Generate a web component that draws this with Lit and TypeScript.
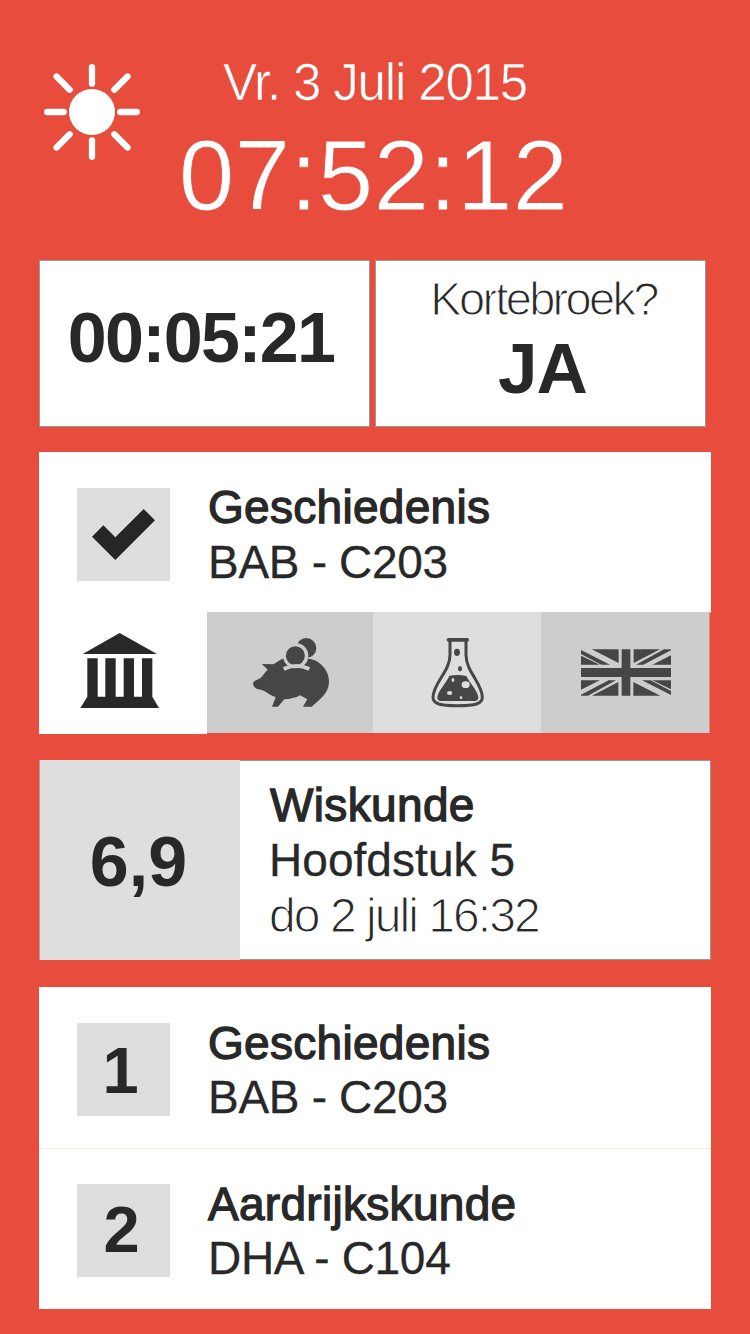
import { LitElement, html, css, svg } from "lit";
import { customElement, property } from "lit/decorators.js";

const RED = css`#e84c3d`;

@customElement("lesson-row")
class LessonRow extends LitElement {
  @property() subject = "";
  @property() room = "";
  @property() badge = "";

  static styles = css`
    :host { display: block; height: 161px; box-sizing: border-box; padding: 36px 0 0 38px; }
    :host([divided]) { padding-top: 35px; border-top: 1px solid #fde6e4; }
    .row { display: flex; align-items: flex-start; }
    .badge {
      width: 93px; height: 93px; flex: none; box-sizing: border-box; padding-right: 6px;
      background: #dedede; font-size: 65px; font-weight: 700; line-height: 95px; text-align: center;
    }
    :host([divided]) .badge { line-height: 91px; padding-right: 4px; }
    .badge.tick { padding: 0; }
    .tick svg { display: block; }
    .info { margin: -7px 0 0 38px; line-height: 54px; white-space: nowrap; }
    :host([loose]) .info { margin-top: -8px; line-height: 55px; }
    .subject { letter-spacing: 0.3px; -webkit-text-stroke: 1.3px #282828; }
    .room { letter-spacing: -0.3px; -webkit-text-stroke: 0.3px #282828; }
  `;

  render() {
    return html`<div class="row">
      ${this.badge
        ? html`<div class="badge">${this.badge}</div>`
        : html`<div class="badge tick"><svg width="93" height="93" viewBox="0 0 93 93">
            <path fill="#262626" d="M15 48.7 26.3 37.3 38.3 49.3 66.7 21 78 32.3 38.3 72Z" />
          </svg></div>`}
      <div class="info">
        <div class="subject">${this.subject}</div>
        <div class="room">${this.room}</div>
      </div>
    </div>`;
  }
}

const temple = html`<svg width="168" height="122" viewBox="27 36 504 366" fill="#282828">
  <path d="M269 99 381 162H158ZM172 175H203V290H226V175H257V290H281V175H312V290H336V175H367V290L387 324H151L172 290Z" />
</svg>`;

const piggy = html`<svg width="166" height="121" viewBox="-69 36 498 363" fill="#464646">
  <path d="M69 251Q70 242 82 239Q92 236 98 227Q104 218 113 209L96 192 131 193Q143 183 158 176L200 170 241 177C272 183 297 212 297 244C297 275 278 293 245 320H219L232 298Q222 293 211 286Q190 297 163 298L144 320H126L137 292Q120 285 103 273Q92 269 82 267Q69 262 69 251Z" />
  <circle cx="229" cy="144" r="30" />
  <circle cx="197" cy="167" r="38" fill="#cdcdcd" />
  <circle cx="196" cy="167" r="28.5" />
  <path d="M161 207Q199 188 238 207" fill="none" stroke="#cdcdcd" stroke-width="11" />
</svg>`;

const flask = html`<svg width="168" height="121" viewBox="-51 36 504 363" fill="#464646">
  <rect x="170" y="114" width="67" height="11" rx="5" />
  <path d="M180 122V165C180 215 129 250 129 292C129 312 150 317 203 317C256 317 277 312 277 292C277 250 228 215 228 165V122" fill="none" stroke="#464646" stroke-width="9" />
  <path d="M178 227Q203 222 229 228C240 250 265 275 265 293Q265 303 250 303H156Q142 303 142 293C142 275 168 250 178 227Z" />
  <ellipse cx="201" cy="157" rx="9" ry="11" />
  <ellipse cx="210" cy="206" rx="6" ry="8" />
  <g fill="#dedede">
    <ellipse cx="189" cy="240" rx="4" ry="6" />
    <ellipse cx="227" cy="254" rx="12" ry="10" />
    <ellipse cx="179" cy="279" rx="8" ry="6" />
    <circle cx="213" cy="293" r="4" />
  </g>
</svg>`;

const halfFlag = "M155 148H236V189ZM123 150 210 194H184L123 162ZM123 167 179 194H123ZM281 148H360L281 189ZM288 194H310L393 151V148H372ZM393 166V194H337Z";

const flag = html`<svg width="168" height="121" viewBox="3 36 504 363" fill="#464646">
  <path d="M123 204H245V148H271V204H393V231H271V287H245V231H123Z" />
  <path d=${halfFlag} />
  <path d=${halfFlag} transform="rotate(180 258 217.5)" />
</svg>`;

const rays = [0, 45, 90, 135, 180, 225, 270, 315];

@customElement("app-root")
class AppRoot extends LitElement {
  static styles = css`
    :host {
      display: block; box-sizing: border-box; width: 750px; height: 1334px; overflow: hidden;
      background: ${RED}; color: #282828;
      font: 46px "Liberation Sans", Arial, sans-serif;
    }
    .header { display: grid; grid-template-columns: 144px 1fr 144px; height: 260px; color: #fff; }
    .sun { margin: 60px 0 0 40px; }
    .now { padding-top: 53px; text-align: center; white-space: nowrap; }
    .date { font-size: 51px; line-height: 60px; letter-spacing: -1.15px; -webkit-text-stroke: 0.6px ${RED}; }
    .clock { margin-top: 7px; padding-right: 3px; font-size: 100px; line-height: 110px; -webkit-text-stroke: 0.9px ${RED}; }
    .main { display: flex; flex-direction: column; margin: 0 39px; }
    .tiles { display: flex; gap: 5px; height: 167px; }
    .tile {
      width: 331px; box-sizing: border-box; border: 1px solid #999; background: #fff;
      text-align: center; white-space: nowrap;
    }
    .countdown { padding: 37px 7px 0 0; font-size: 70px; line-height: 80px; font-weight: 700; letter-spacing: -1.7px; }
    .question { margin-top: 9px; padding-left: 6px; font-size: 47px; line-height: 58px; letter-spacing: -2.7px; -webkit-text-stroke: 1.15px #fff; }
    .answer { padding: 1px 0 0 4px; font-size: 71px; line-height: 80px; font-weight: 700; letter-spacing: -1px; }
    .today { margin-top: 25px; height: 282px; }
    .lesson { background: #fff; }
    .tabs { display: flex; margin-top: -1px; height: 121px; position: relative; }
    .tab { height: 121px; background: #cdcdcd; }
    .tab svg { display: block; }
    .current { height: 122px; background: #fff; }
    .light { background: #dedede; }
    .last { border-right: 1px solid #d9928a; }
    .grade { display: flex; margin-top: 26px; height: 200px; background: #fff; }
    .mark {
      width: 201px; box-sizing: border-box; border-left: 1px solid #b99; background: #dedede;
      font-size: 70px; line-height: 205px; font-weight: 700; text-align: center; padding-right: 3px;
    }
    .detail {
      flex: 1; box-sizing: border-box; border: 1px solid #999; border-left: 0;
      padding: 17px 0 0 29px; line-height: 55px; white-space: nowrap;
    }
    .subject { padding-left: 1px; letter-spacing: 0.35px; -webkit-text-stroke: 1.3px #282828; }
    .topic { letter-spacing: 0.05px; -webkit-text-stroke: 0.3px #282828; }
    .when { font-size: 48px; letter-spacing: -1.95px; -webkit-text-stroke: 1.15px #fff; }
    .list { margin-top: 27px; height: 322px; background: #fff; }
  `;

  render() {
    return html`
      <div class="header">
        <svg class="sun" width="104" height="104" viewBox="-52 -52 104 104">
          <circle r="23" fill="#fff" />
          ${rays.map((a) => svg`<path d=${a % 90 ? "M0-31.6V-50.2" : "M0-28.3V-44.8"} transform="rotate(${a})" stroke="#fff" stroke-width="6.3" stroke-linecap="round" />`)}
        </svg>
        <div class="now">
          <div class="date">Vr. 3 Juli 2015</div>
          <div class="clock">07:52:12</div>
        </div>
      </div>
      <div class="main">
        <div class="tiles">
          <div class="tile countdown">00:05:21</div>
          <div class="tile">
            <div class="question">Kortebroek?</div>
            <div class="answer">JA</div>
          </div>
        </div>
        <div class="today">
          <lesson-row class="lesson" loose subject="Geschiedenis" room="BAB - C203"></lesson-row>
          <div class="tabs">
            <div class="tab current">${temple}</div>
            <div class="tab">${piggy}</div>
            <div class="tab light">${flask}</div>
            <div class="tab last">${flag}</div>
          </div>
        </div>
        <div class="grade">
          <div class="mark">6,9</div>
          <div class="detail">
            <div class="subject">Wiskunde</div>
            <div class="topic">Hoofdstuk 5</div>
            <div class="when">do 2 juli 16:32</div>
          </div>
        </div>
        <div class="list">
          <lesson-row badge="1" subject="Geschiedenis" room="BAB - C203"></lesson-row>
          <lesson-row divided badge="2" subject="Aardrijkskunde" room="DHA - C104"></lesson-row>
        </div>
      </div>
    `;
  }
}
